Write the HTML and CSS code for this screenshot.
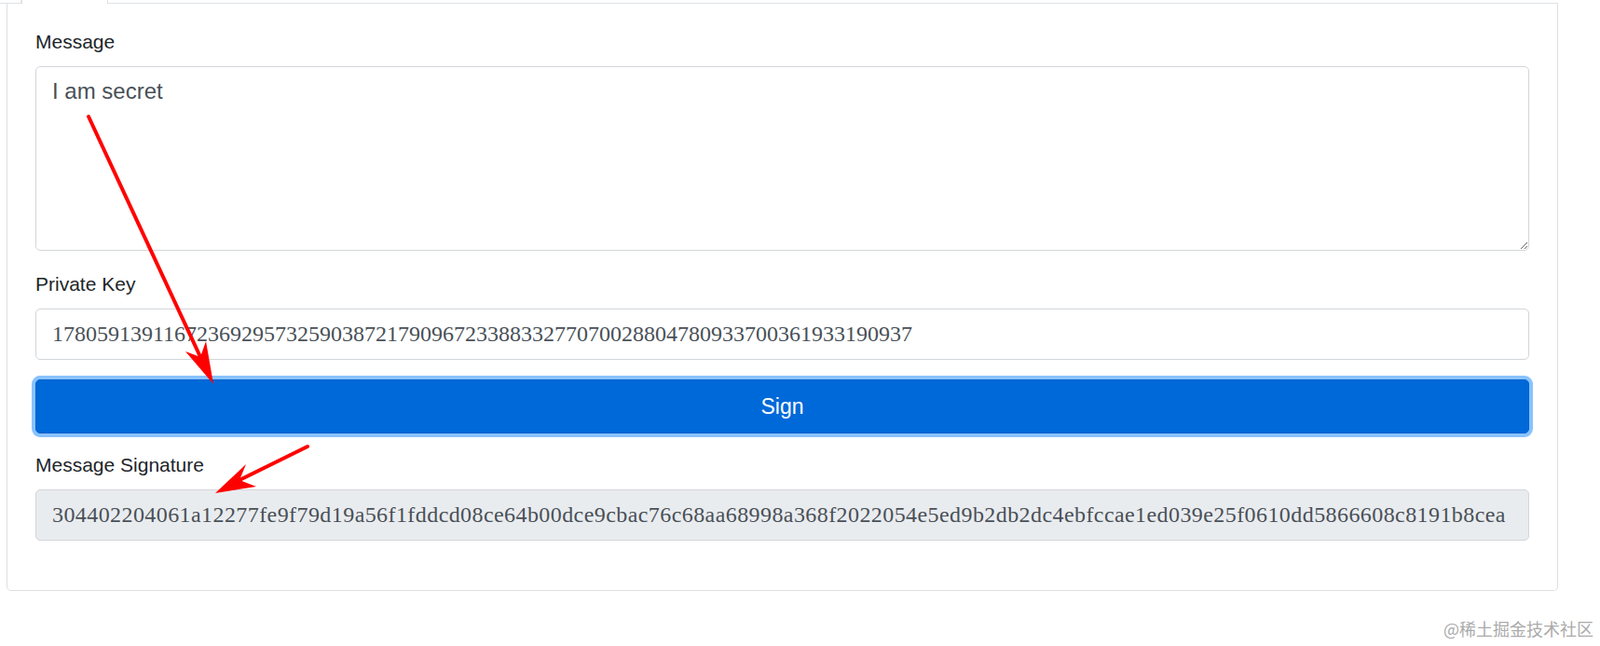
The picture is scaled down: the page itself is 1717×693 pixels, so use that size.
FILE: index.html
```html
<!DOCTYPE html>
<html lang="en">
<head>
  <meta charset="UTF-8" />
  <meta name="viewport" content="width=device-width, initial-scale=1.0"/>
  <title>Sign Message</title>
  <link rel="stylesheet" href="styles.css">
</head>
<body>
  <div class="tabs">
    <div class="tab"></div>
    <div class="tab active"></div>
    <div class="tab rest"></div>
  </div>

  <div class="panel">
    <div class="field">
      <label for="message">Message</label>
      <textarea id="message" class="control area">I am secret</textarea>
    </div>

    <div class="field">
      <label for="privateKey">Private Key</label>
      <input id="privateKey" class="control mono" type="text" value="17805913911672369295732590387217909672338833277070028804780933700361933190937">
    </div>

    <button class="btn-sign">Sign</button>

    <div class="field">
      <label for="signature">Message Signature</label>
      <input id="signature" class="control mono sig" type="text" readonly value="304402204061a12277fe9f79d19a56f1fddcd08ce64b00dce9cbac76c68aa68998a368f2022054e5ed9b2db2dc4ebfccae1ed039e25f0610dd5866608c8191b8cea">
    </div>
  </div>

  <!-- annotation arrows drawn over the form -->
  <svg class="marks" width="1717" height="693" viewBox="0 0 1717 693">
    <line x1="95" y1="125" x2="216" y2="385" stroke="#f00" stroke-width="4" stroke-linecap="round"/>
    <polygon points="229,412 221,366 215,383 199,377" fill="#f00"/>
    <line x1="330" y1="479" x2="257" y2="515" stroke="#f00" stroke-width="4" stroke-linecap="round"/>
    <polygon points="231,529 264,498 257,515 275,522" fill="#f00"/>
  </svg>

  <div class="watermark">@稀土掘金技术社区</div>
</body>
</html>
```

FILE: styles.css
```css
body {
  margin: 0;
  background: #fff;
  font-family: "Liberation Sans", Arial, sans-serif;
  color: #212529;
  width: 1717px;
  height: 693px;
  overflow: hidden;
  position: relative;
}
.tabs {
  display: flex;
  width: 1672px;
  height: 4px;
}
.tab {
  width: 22px;
  border-bottom: 1px solid #dee2e6;
  border-right: 1px solid #e6e8ea;
}
.tab.active {
  width: 91px;
  border-bottom: none;
  border-left: 1px solid #dee2e6;
  border-right: 1px solid #dee2e6;
}
.tab.rest {
  flex: 1;
  border-right: none;
}
.panel {
  margin-left: 7px;
  width: 1665px;
  box-sizing: border-box;
  padding: 26px 30px 53px;
  border: 1px solid #dfdfdf;
  border-top: none;
  border-radius: 0 0 5px 5px;
}
.field {
  margin-bottom: 21px;
}
.field:last-child {
  margin-bottom: 0;
}
label {
  display: block;
  font-size: 21px;
  line-height: 30px;
  margin-bottom: 11px;
}
.control {
  display: block;
  width: 100%;
  box-sizing: border-box;
  border: 1px solid #d2d6da;
  border-radius: 5px;
  color: #495057;
  background: #fff;
  outline: none;
  margin: 0;
}
.area {
  height: 198px;
  padding: 8px 17px 4px;
  font-family: "Liberation Sans", Arial, sans-serif;
  font-size: 24px;
  line-height: 36px;
  resize: vertical;
}
.mono {
  height: 55px;
  padding: 0 17px;
  font-family: "Liberation Serif", "Times New Roman", serif;
  font-size: 24px;
  line-height: 30px;
}
.sig {
  background: #e9ecef;
  letter-spacing: 0.42px;
}
.btn-sign {
  display: block;
  width: 100%;
  height: 58px;
  margin: 2px 0 19px;
  padding: 0;
  font-family: "Liberation Sans", Arial, sans-serif;
  font-size: 23px;
  color: #fff;
  background: #0069d9;
  border: 1px solid #0062cc;
  border-radius: 5px;
  box-shadow: 0 0 0 4px rgba(38, 143, 255, 0.55);
  cursor: pointer;
}
.marks {
  position: absolute;
  top: 0;
  left: 0;
  pointer-events: none;
}
.watermark {
  position: absolute;
  right: 7px;
  top: 663px;
  font-family: "Noto Sans CJK SC", sans-serif;
  font-size: 18px;
  line-height: 22px;
  color: #aaa;
}
```
